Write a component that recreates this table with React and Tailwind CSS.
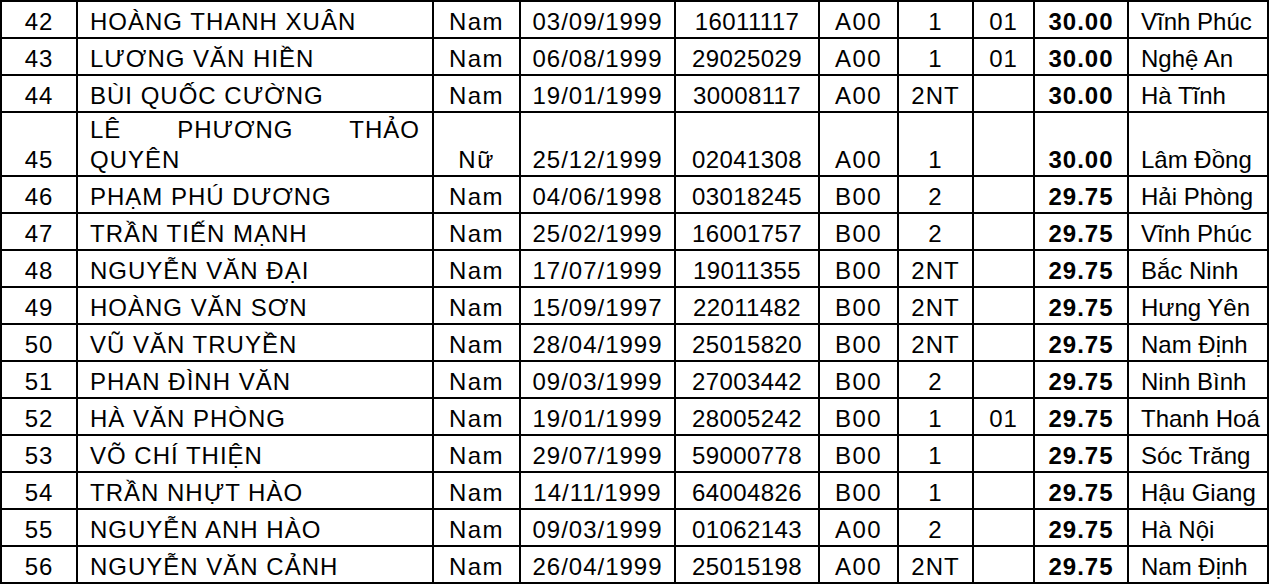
import React from "react";

const rows = [
  ["42", "HOÀNG THANH XUÂN", "Nam", "03/09/1999", "16011117", "A00", "1", "01", "30.00", "Vĩnh Phúc"],
  ["43", "LƯƠNG VĂN HIỀN", "Nam", "06/08/1999", "29025029", "A00", "1", "01", "30.00", "Nghệ An"],
  ["44", "BÙI QUỐC CƯỜNG", "Nam", "19/01/1999", "30008117", "A00", "2NT", "", "30.00", "Hà Tĩnh"],
  ["45", "LÊ PHƯƠNG THẢO QUYÊN", "Nữ", "25/12/1999", "02041308", "A00", "1", "", "30.00", "Lâm Đồng"],
  ["46", "PHẠM PHÚ DƯƠNG", "Nam", "04/06/1998", "03018245", "B00", "2", "", "29.75", "Hải Phòng"],
  ["47", "TRẦN TIẾN MẠNH", "Nam", "25/02/1999", "16001757", "B00", "2", "", "29.75", "Vĩnh Phúc"],
  ["48", "NGUYỄN VĂN ĐẠI", "Nam", "17/07/1999", "19011355", "B00", "2NT", "", "29.75", "Bắc Ninh"],
  ["49", "HOÀNG VĂN SƠN", "Nam", "15/09/1997", "22011482", "B00", "2NT", "", "29.75", "Hưng Yên"],
  ["50", "VŨ VĂN TRUYỀN", "Nam", "28/04/1999", "25015820", "B00", "2NT", "", "29.75", "Nam Định"],
  ["51", "PHAN ĐÌNH VĂN", "Nam", "09/03/1999", "27003442", "B00", "2", "", "29.75", "Ninh Bình"],
  ["52", "HÀ VĂN PHÒNG", "Nam", "19/01/1999", "28005242", "B00", "1", "01", "29.75", "Thanh Hoá"],
  ["53", "VÕ CHÍ THIỆN", "Nam", "29/07/1999", "59000778", "B00", "1", "", "29.75", "Sóc Trăng"],
  ["54", "TRẦN NHỰT HÀO", "Nam", "14/11/1999", "64004826", "B00", "1", "", "29.75", "Hậu Giang"],
  ["55", "NGUYỄN ANH HÀO", "Nam", "09/03/1999", "01062143", "A00", "2", "", "29.75", "Hà Nội"],
  ["56", "NGUYỄN VĂN CẢNH", "Nam", "26/04/1999", "25015198", "A00", "2NT", "", "29.75", "Nam Định"],
];

// per column alignment / spacing
const align = [
  "justify-center tracking-[1px]",
  "justify-start px-3 tracking-[1px]",
  "justify-center tracking-[1.5px]",
  "justify-center tracking-[1px]",
  "justify-center tracking-[0.4px]",
  "justify-center tracking-[1.5px]",
  "justify-center tracking-[1px]",
  "justify-center tracking-[1px]",
  "justify-center font-bold tracking-[1px]",
  "justify-start px-3",
];

const App = () => {
  return (
    <div className="min-h-screen bg-white">
      <div className="grid w-fit grid-cols-[74px_354px_85px_153px_142px_77px_73px_59px_92px_138px] gap-[2px] bg-black p-[2px] font-['Liberation_Sans',Arial,sans-serif] text-[24px] leading-[30px] text-black">
        {rows.map((r) => {
          const tall = r[0] === "45";
          return r.map((cell, i) => (
            <div
              key={r[0] + "-" + i}
              className={`flex items-end bg-white whitespace-nowrap ${
                tall ? "h-[62px]" : "h-[35px]"
              } ${align[i]}`}
            >
              {tall && i === 1 ? (
                <div className="flex w-full flex-col">
                  <div className="flex justify-between">
                    <span>LÊ</span>
                    <span>PHƯƠNG</span>
                    <span>THẢO</span>
                  </div>
                  <span>QUYÊN</span>
                </div>
              ) : (
                cell
              )}
            </div>
          ));
        })}
      </div>
    </div>
  );
};

export default App;
